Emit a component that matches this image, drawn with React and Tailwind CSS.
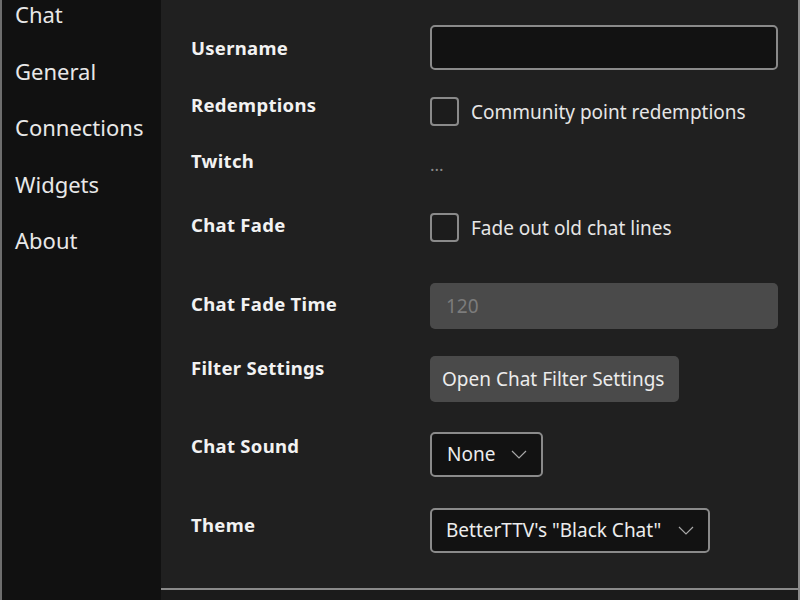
import React from "react";

const Chevron = () => (
  <svg width="16" height="9" viewBox="0 0 16 9" fill="none" className="shrink-0">
    <path d="M1 1l7 7 7-7" stroke="#a8a8a8" strokeWidth="1.2" />
  </svg>
);

const Checkbox = ({ label }) => (
  <div className="flex h-[29px] items-center gap-[12px]">
    <div className="h-[29px] w-[29px] rounded-[4px] border-2 border-[#8a8a8a] bg-[#1c1c1c]" />
    <span className="text-[19px] leading-[28px] text-[#e6e6e6]">{label}</span>
  </div>
);

const Label = ({ children, pt }) => (
  <div className={`w-[239px] shrink-0 text-[18.5px] font-bold leading-[24px] tracking-[0.3px] text-[#f2f2f2] ${pt}`}>
    {children}
  </div>
);

export default function App() {
  const nav = ["Chat", "General", "Connections", "Widgets", "About"];
  return (
    <div className="flex h-[600px] w-[800px] overflow-hidden border-l-2 border-[#6e6e6e] bg-[#202020] font-['Noto_Sans',sans-serif]">
      <nav className="flex w-[159px] shrink-0 flex-col gap-[28.5px] bg-[#111111] pl-[13px]">
        {nav.map((n) => (
          <div key={n} className="text-[22px] leading-[28px] text-[#e8e8e8]">
            {n}
          </div>
        ))}
      </nav>

      <main className="flex flex-1 flex-col border-r-2 border-[#8c8c8c]">
        <div className="flex flex-1 flex-col pl-[30px] pt-[25px]">
          {/* Username */}
          <div className="flex h-[45px]">
            <Label pt="pt-[11px]">Username</Label>
            <div className="h-[45px] w-[348px] rounded-[5px] border-2 border-[#8a8a8a] bg-[#121212]" />
          </div>

          {/* Redemptions */}
          <div className="mt-[20px] flex h-[35px]">
            <Label pt="pt-[3px]">Redemptions</Label>
            <div className="pt-[7px]">
              <Checkbox label="Community point redemptions" />
            </div>
          </div>

          {/* Twitch */}
          <div className="mt-[20px] flex h-[31px]">
            <Label pt="pt-[4px]">Twitch</Label>
            <div className="pt-[6px] text-[17px] leading-[28px] text-[#8a8a8a]">...</div>
          </div>

          {/* Chat fade */}
          <div className="mt-[37px] flex h-[29px]">
            <Label pt="pt-0">Chat Fade</Label>
            <Checkbox label="Fade out old chat lines" />
          </div>

          {/* Chat fade time */}
          <div className="mt-[41px] flex h-[46px]">
            <Label pt="pt-[9px]">Chat Fade Time</Label>
            <div className="flex h-[46px] w-[348px] items-center rounded-[5px] bg-[#4a4a4a] pl-[16px] text-[19px] text-[#7c7c7c]">
              120
            </div>
          </div>

          {/* Filter settings */}
          <div className="mt-[27px] flex h-[46px]">
            <Label pt="pt-0">Filter Settings</Label>
            <button className="flex h-[46px] w-[249px] items-center rounded-[5px] bg-[#4a4a4a] pl-[12px] text-[19px] text-[#ececec]">
              Open Chat Filter Settings
            </button>
          </div>

          {/* Chat sound */}
          <div className="mt-[30px] flex h-[45px]">
            <Label pt="pt-[2px]">Chat Sound</Label>
            <div className="flex h-[45px] w-[113px] items-center justify-between rounded-[5px] border-2 border-[#8a8a8a] bg-[#121212] pl-[15px] pr-[14px] text-[19px] text-[#ececec]">
              <span>None</span>
              <Chevron />
            </div>
          </div>

          {/* Theme */}
          <div className="mt-[31px] flex h-[45px]">
            <Label pt="pt-[5px]">Theme</Label>
            <div className="flex h-[45px] w-[280px] items-center justify-between rounded-[5px] border-2 border-[#8a8a8a] bg-[#121212] pl-[14px] pr-[14px] text-[19px] text-[#ececec]">
              <span>BetterTTV's "Black Chat"</span>
              <Chevron />
            </div>
          </div>
        </div>
        <div className="h-[2px] bg-[#8a8a8a]" />
        <div className="h-[10px] bg-[#1b1b1b]" />
      </main>
    </div>
  );
}
